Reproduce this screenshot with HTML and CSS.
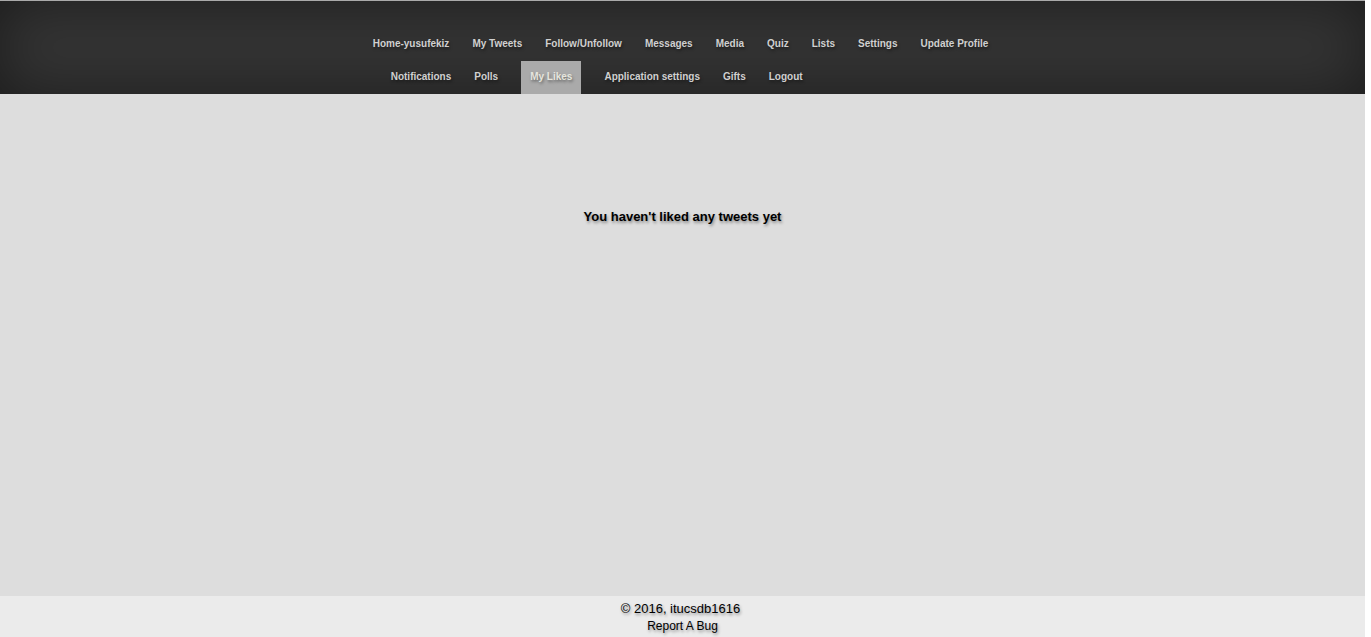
FILE: index.html
```html
<!DOCTYPE html>
<html lang="en">
<head>
<meta charset="utf-8">
<title>My Likes</title>
<link rel="stylesheet" href="styles.css">
</head>
<body>
<div class="page">
  <header class="header">
    <nav class="nav">
      <ul class="nav-row">
        <li><a href="#">Home-yusufekiz</a></li>
        <li><a href="#">My Tweets</a></li>
        <li><a href="#">Follow/Unfollow</a></li>
        <li><a href="#">Messages</a></li>
        <li><a href="#">Media</a></li>
        <li><a href="#">Quiz</a></li>
        <li><a href="#">Lists</a></li>
        <li><a href="#">Settings</a></li>
        <li><a href="#">Update Profile</a></li>
      </ul>
      <ul class="nav-row nav-row-second">
        <li><a href="#">Notifications</a></li>
        <li><a href="#">Polls</a></li>
        <li class="active"><a href="#">My Likes</a></li>
        <li><a href="#">Application settings</a></li>
        <li><a href="#">Gifts</a></li>
        <li><a href="#">Logout</a></li>
      </ul>
    </nav>
  </header>
  <main class="content">
    <h1 class="message">You haven't liked any tweets yet</h1>
  </main>
  <footer class="footer">
    <p class="copyright">© 2016, itucsdb1616</p>
    <a class="report" href="#">Report A Bug</a>
  </footer>
</div>
</body>
</html>
```
FILE: styles.css
```css
body {
  margin: 0;
  background: #fff;
  font-family: "Liberation Sans", Arial, sans-serif;
  color: #000;
}

.page {
  display: flex;
  flex-direction: column;
  min-height: 100vh;
  margin-right: 6px;
  background: #ddd;
  text-shadow: 1px 2px 3px rgba(0, 0, 0, 0.4);
}

.header {
  display: flex;
  justify-content: center;
  padding: 27px 4px 0 0;
  border-top: 1px solid #aaa;
  background: #343434;
  box-shadow: inset 0 0 60px rgba(0, 0, 0, 0.45);
}

.nav-row {
  display: flex;
  gap: 23px;
  margin: 0;
  padding: 0;
  list-style: none;
  font-size: 10px;
  font-weight: bold;
  line-height: 31px;
}

.nav-row li {
  padding-bottom: 2px;
}

.nav-row-second {
  padding-left: 18px;
}

.nav-row a {
  color: #d0d0d0;
  text-decoration: none;
}

.nav-row .active {
  padding: 0 9px 2px;
  background: #aaa;
}

.nav-row .active a {
  color: #e5e5dd;
}

.content {
  flex: 1;
  padding-top: 114px;
  text-align: center;
}

.message {
  margin: 0;
  font-size: 13px;
  line-height: 18px;
}

.footer {
  padding: 4px 0 2px;
  background: #ebebeb;
  text-align: center;
  line-height: 17px;
}

.copyright {
  margin: 0;
  padding-right: 4px;
  font-size: 13px;
}

.report {
  display: block;
  padding-top: 1px;
  color: #000;
  font-size: 12px;
  text-decoration: none;
}
```
